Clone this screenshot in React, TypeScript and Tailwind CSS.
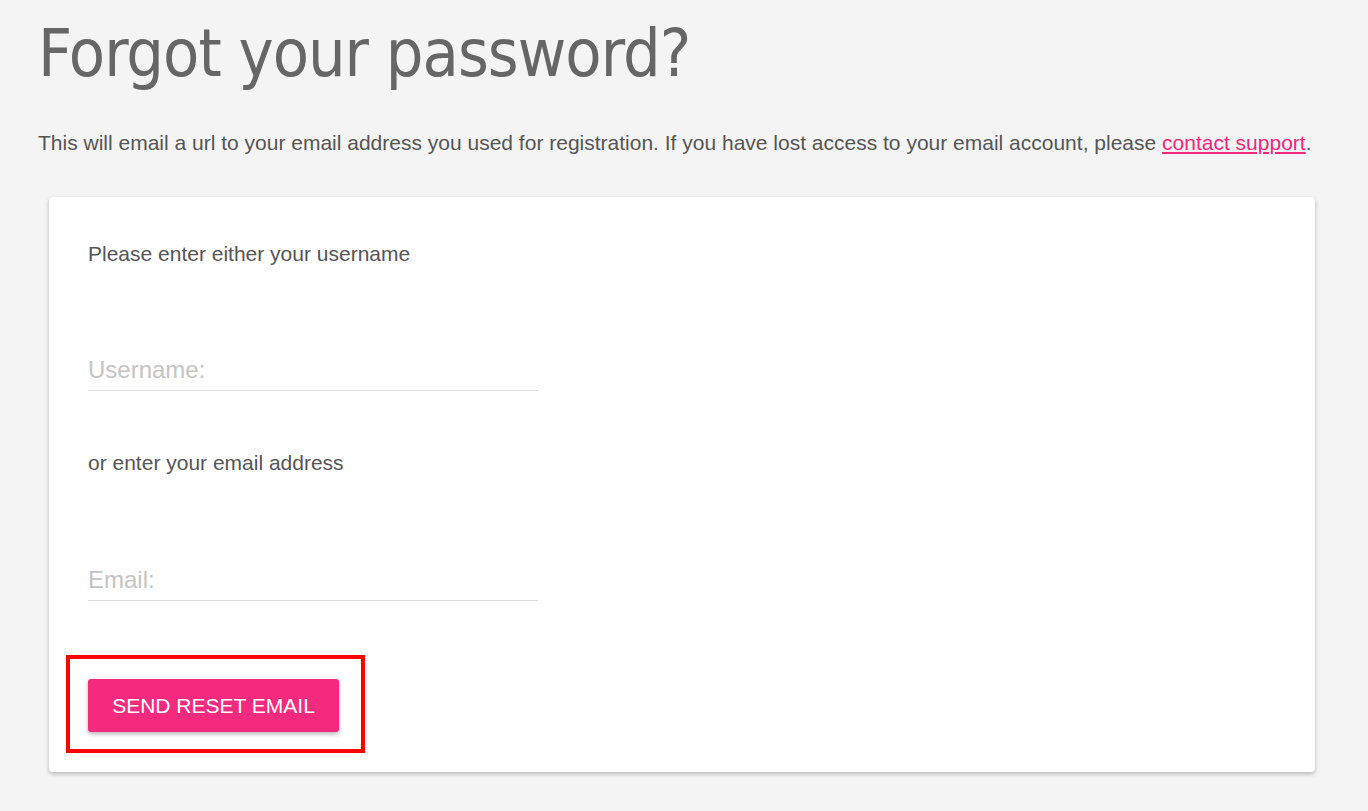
export default function App() {
  return (
    <div className="min-h-[811px] bg-[#f4f4f4] px-[38px] pt-[12px] pb-10 font-['Liberation_Sans',Arial,sans-serif] text-[#555]">
      <h1 className="font-['Liberation_Sans_Narrow','DejaVu_Sans_Condensed',sans-serif] text-[66px] leading-[84px] font-normal text-[#666] tracking-[-1px]">
        Forgot your password?
      </h1>
      <p className="mt-[34px] text-[21px] leading-[26px]">
        This will email a url to your email address you used for registration. If you have lost access to your email
        account, please{" "}
        <a href="#" className="text-[#f0287a] underline">
          contact support
        </a>
        .
      </p>
      <div className="mt-[41px] ml-[11px] w-[1266px] rounded bg-white px-[39px] pt-[44px] pb-[19px] shadow-[0_2px_4px_rgba(0,0,0,0.25)]">
        <p className="text-[21px] leading-[26px]">Please enter either your username</p>
        <div className="mt-[90px] w-[450px] border-b border-[#ddd] pb-[5px]">
          <input
            placeholder="Username:"
            className="w-full bg-transparent text-[24px] leading-[26px] outline-none placeholder:text-[#c4c4c4]"
          />
        </div>
        <p className="mt-[59px] text-[21px] leading-[26px]">or enter your email address</p>
        <div className="mt-[91px] w-[450px] border-b border-[#ddd] pb-[5px]">
          <input
            placeholder="Email:"
            className="w-full bg-transparent text-[24px] leading-[26px] outline-none placeholder:text-[#c4c4c4]"
          />
        </div>
        <div className="mt-[54px] -ml-[22px] inline-block border-4 border-[#ff0000] pt-[20px] pr-[22px] pb-[17px] pl-[18px]">
          <button className="block h-[53px] w-[251px] rounded-[3px] bg-[#f42a7f] text-[21px] text-white shadow-[0_2px_4px_rgba(0,0,0,0.3)]">
            SEND RESET EMAIL
          </button>
        </div>
      </div>
    </div>
  );
}
